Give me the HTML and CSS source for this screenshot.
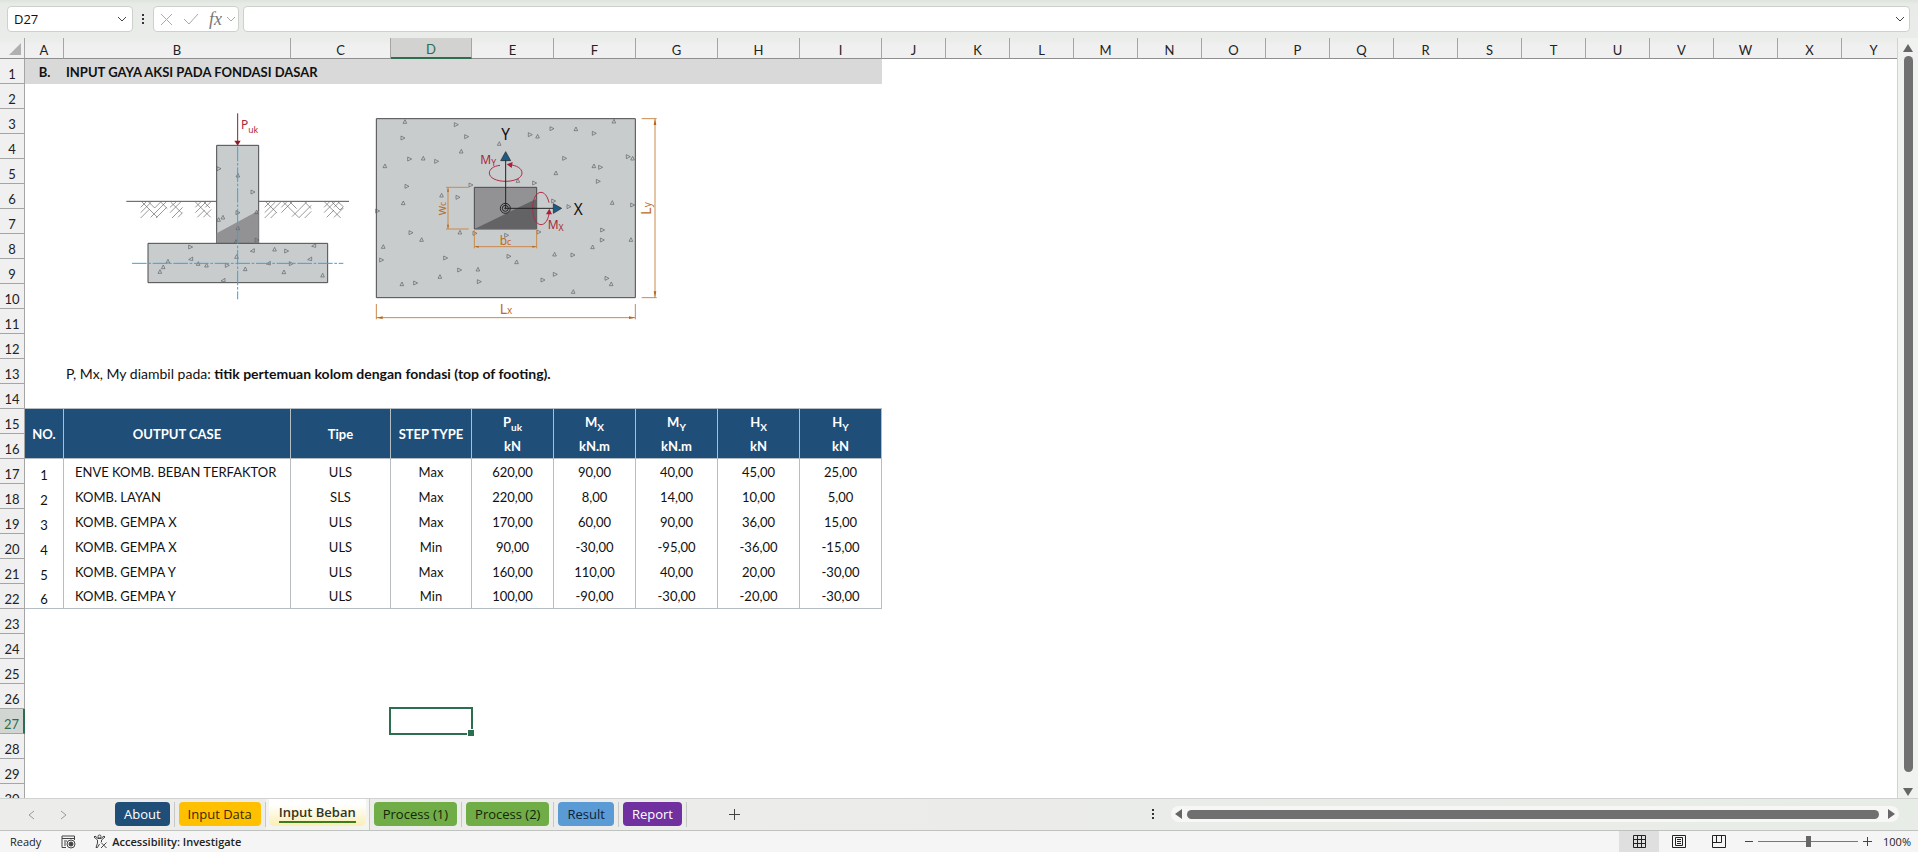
FILE: index.html
```html
<!DOCTYPE html>
<html lang="id">
<head>
    <meta charset="UTF-8">
    <meta name="viewport" content="width=device-width, initial-scale=1.0">
    <title>Input Beban</title>
    <link rel="stylesheet" href="styles.css">
</head>
<body>
    <!-- Formula bar -->
    <header class="formula-bar">
        <div class="name-box">
            <input type="text" value="D27" aria-label="Name Box">
            <button class="drop" aria-label="Open names"><svg width="10" height="6" viewBox="0 0 10 6"><path d="M1 1l4 4 4-4"/></svg></button>
        </div>
        <svg class="dots" width="3" height="11" viewBox="0 0 3 11"><path d="M0 0h2v2H0zM0 4h2v2H0zM0 8h2v2H0z"/></svg>
        <div class="fx-box">
            <button aria-label="Cancel"><svg width="13" height="13" viewBox="0 0 13 13"><path d="M1 1l11 11M12 1L1 12"/></svg></button>
            <button aria-label="Enter"><svg width="16" height="12" viewBox="0 0 16 12"><path d="M1 6l5 5L15 1"/></svg></button>
            <button class="fx" aria-label="Insert function">fx</button>
            <button class="fx-drop" aria-label="More functions"><svg width="10" height="6" viewBox="0 0 10 6"><path d="M1 1l4 4 4-4"/></svg></button>
        </div>
        <div class="formula">
            <input type="text" aria-label="Formula">
            <button class="drop" aria-label="Expand formula bar"><svg width="10" height="6" viewBox="0 0 10 6"><path d="M1 1l4 4 4-4"/></svg></button>
        </div>
    </header>

    <!-- Worksheet -->
    <main class="sheet">
        <div class="grid">
            <table>
                <colgroup>
                    <col class="w-head"><col class="w-no"><col class="w-case"><col class="w-type"><col class="w-step">
                    <col class="w-num" span="5">
                    <col class="w-std" span="16">
                </colgroup>
                <thead>
                    <tr>
                        <th class="corner" aria-label="Select all"><svg width="12" height="12" viewBox="0 0 12 12"><path d="M12 0v12H0z"/></svg></th>
                        <th>A</th><th>B</th><th>C</th><th class="on">D</th><th>E</th><th>F</th><th>G</th><th>H</th><th>I</th>
                        <th>J</th><th>K</th><th>L</th><th>M</th><th>N</th><th>O</th><th>P</th><th>Q</th><th>R</th><th>S</th>
                        <th>T</th><th>U</th><th>V</th><th>W</th><th>X</th><th>Y</th>
                    </tr>
                </thead>
                <tbody>
                    <tr><th>1</th><td class="title center">B.</td><td class="title" colspan="8">INPUT GAYA AKSI PADA FONDASI DASAR</td><td colspan="16"></td></tr>
                    <tr>
                        <th>2</th>
                        <td class="drawing" rowspan="11" colspan="25">
                            <div class="figures">
                                <!-- Elevation -->
                                <svg width="250" height="210" viewBox="0 0 750 630">
                                    <defs>
                                        <path id="up" d="M0 -6L5 5H-6z"/>
                                        <path id="rt" d="M-5 -6L7 0L-5 6z"/>
                                        <path id="lf" d="M6 -6L-6 2L6 5z"/>
                                    </defs>
                                    <g class="concrete">
                                        <path d="M320 136H446V430H320z"/>
                                        <path class="shade" d="M320 400L446 332V430H320z"/>
                                        <path d="M114 430H653V548H114z"/>
                                    </g>
                                    <path class="ground" d="M49 304H320M446 304H717"/>
                                    <g class="hatch">
                                        <path d="M92 322L108 306M92 338L124 306M92 354L118 328M96 306L142 352M116 306L134 324L152 306M122 352L168 306M138 354L170 322M152 306L172 326M180 322L198 306M180 338L212 306M186 354L218 322M204 352L218 338M182 306L216 340"/>
                                        <path d="M256 322L272 306M256 338L288 306M262 352L284 330M256 306L302 352M282 306L300 324M286 322L302 306M280 352L304 328"/>
                                        <path d="M464 322L480 306M464 338L496 306M464 354L512 306M482 354L500 336M468 306L500 338M514 322L530 306M514 338L546 306M520 306L566 352M540 306L560 326M546 350L590 306M566 354L604 316M584 354L604 334M584 306L604 326"/>
                                        <path d="M642 322L658 306M642 338L674 306M650 352L672 330M644 306L692 354M666 306L690 330L700 320M672 322L688 306M672 352L700 324M684 306L700 320"/>
                                    </g>
                                    <g class="stones">
                                        <use href="#rt" x="326" y="206"/><use href="#up" x="384" y="226"/><use href="#rt" x="428" y="276"/>
                                        <use href="#rt" x="383" y="338"/><use href="#up" x="326" y="359"/><use href="#up" x="339" y="352"/>
                                        <use href="#up" x="440" y="336"/><use href="#up" x="384" y="384"/><use href="#up" x="378" y="425"/><use href="#rt" x="440" y="420"/>
                                        <use href="#rt" x="241" y="441"/><use href="#lf" x="242" y="477"/><use href="#up" x="265" y="491"/><use href="#up" x="290" y="496"/>
                                        <use href="#up" x="174" y="484"/><use href="#up" x="160" y="501"/><use href="#up" x="150" y="515"/><use href="#rt" x="351" y="496"/>
                                        <use href="#up" x="380" y="470"/><use href="#up" x="406" y="507"/><use href="#lf" x="427" y="452"/><use href="#lf" x="475" y="490"/>
                                        <use href="#up" x="494" y="448"/><use href="#rt" x="529" y="453"/><use href="#rt" x="543" y="491"/><use href="#up" x="522" y="516"/>
                                        <use href="#lf" x="599" y="477"/><use href="#lf" x="611" y="437"/><use href="#up" x="638" y="526"/><use href="#lf" x="339" y="541"/>
                                    </g>
                                    <path class="axis" d="M383 140V598M66 490H700"/>
                                    <path class="load" d="M383 40V126"/>
                                    <path class="load-head" d="M373 122H392L383 137z"/>
                                    <text class="red" x="393" y="88" font-size="36">P<tspan font-size="26" dy="10">uk</tspan></text>
                                </svg>
                                <!-- Plan -->
                                <svg width="320" height="230" viewBox="0 0 960 690">
                                    <g class="concrete">
                                        <path d="M49 56H826V593H49z"/>
                                        <path class="column" d="M343 262H530V387H343z"/>
                                        <path class="column-shade" d="M345 386L530 296V386z"/>
                                    </g>
                                    <g class="stones">
                                        <use href="#up" x="135" y="65"/><use href="#rt" x="288" y="74"/><use href="#rt" x="128" y="114"/><use href="#rt" x="319" y="110"/>
                                        <use href="#up" x="418" y="131"/><use href="#rt" x="510" y="104"/><use href="#up" x="533" y="109"/><use href="#rt" x="575" y="86"/>
                                        <use href="#up" x="648" y="87"/><use href="#rt" x="702" y="100"/><use href="#up" x="762" y="64"/><use href="#up" x="304" y="154"/>
                                        <use href="#rt" x="148" y="177"/><use href="#up" x="190" y="175"/><use href="#rt" x="229" y="184"/><use href="#up" x="75" y="198"/>
                                        <use href="#rt" x="613" y="175"/><use href="#rt" x="804" y="170"/><use href="#up" x="818" y="175"/><use href="#up" x="702" y="198"/>
                                        <use href="#rt" x="721" y="202"/><use href="#up" x="588" y="219"/><use href="#rt" x="714" y="244"/><use href="#up" x="474" y="242"/>
                                        <use href="#rt" x="523" y="249"/><use href="#rt" x="332" y="255"/><use href="#rt" x="140" y="259"/><use href="#up" x="245" y="286"/>
                                        <use href="#rt" x="293" y="292"/><use href="#up" x="130" y="309"/><use href="#rt" x="52" y="333"/><use href="#rt" x="580" y="303"/>
                                        <use href="#rt" x="626" y="320"/><use href="#up" x="757" y="308"/><use href="#rt" x="817" y="315"/><use href="#rt" x="152" y="398"/>
                                        <use href="#up" x="185" y="419"/><use href="#up" x="300" y="397"/><use href="#rt" x="344" y="400"/><use href="#rt" x="439" y="406"/>
                                        <use href="#rt" x="536" y="396"/><use href="#rt" x="727" y="390"/><use href="#rt" x="726" y="420"/><use href="#up" x="813" y="419"/>
                                        <use href="#up" x="70" y="440"/><use href="#rt" x="64" y="480"/><use href="#rt" x="256" y="474"/><use href="#rt" x="446" y="469"/>
                                        <use href="#up" x="470" y="486"/><use href="#up" x="584" y="463"/><use href="#rt" x="638" y="465"/><use href="#up" x="698" y="441"/>
                                        <use href="#rt" x="298" y="510"/><use href="#up" x="354" y="508"/><use href="#up" x="240" y="530"/><use href="#rt" x="357" y="545"/>
                                        <use href="#up" x="126" y="552"/><use href="#rt" x="166" y="549"/><use href="#rt" x="585" y="523"/><use href="#rt" x="548" y="540"/>
                                        <use href="#rt" x="740" y="535"/><use href="#up" x="754" y="552"/><use href="#up" x="640" y="575"/>
                                    </g>
                                    <g class="dims">
                                        <path d="M258 262H326M258 387H326M264 262V387M343 390V445M530 390V445M343 440H530M845 56H890M845 593H890M885 56V593M49 612V658M826 612V658M49 653H826"/>
                                        <path class="tips" d="M885 57l-4 18h8zM885 592l-4-18h8zM50 653l18-4v8zM825 653l-18-4v8zM264 263l-3 12h6zM264 386l-3-12h6zM344 440l12-3v6zM529 440l-12-3v6z"/>
                                    </g>
                                    <g class="moment">
                                        <path d="M420 196C400 198 388 208 388 219C388 234 410 244 437 244S486 234 486 219C486 205 470 196 448 194"/>
                                        <path d="M567 308C562 286 552 277 543 277C528 277 518 298 518 325S528 374 543 374C555 374 564 360 567 342"/>
                                        <path class="tips" d="M440 193L458 186L455 204zM568 326L558 343H576z"/>
                                    </g>
                                    <path class="arrows" d="M437 325V180M437 325H580"/>
                                    <path class="arrow-heads" d="M437 155L422 182H452zM605 325L580 311V340z"/>
                                    <g class="origin"><circle cx="436" cy="325" r="15"/><circle cx="436" cy="325" r="9"/><circle cx="436" cy="325" r="2"/></g>
                                    <g class="axis-names"><text x="424" y="121" font-size="46">Y</text><text x="641" y="344" font-size="46">X</text></g>
                                    <g class="red">
                                        <text x="361" y="193" font-size="36">M<tspan font-size="26" dy="6">Y</tspan></text>
                                        <text x="563" y="388" font-size="36">M<tspan font-size="26" dy="6">X</tspan></text>
                                    </g>
                                    <g class="orange">
                                        <text x="419" y="434" font-size="36">b<tspan font-size="26">c</tspan></text>
                                        <text x="419" y="641" font-size="42">L<tspan font-size="30">x</tspan></text>
                                        <text transform="translate(257 346) rotate(-90)" font-size="36">w<tspan font-size="26">c</tspan></text>
                                        <text transform="translate(873 344) rotate(-90)" font-size="42">L<tspan font-size="30">y</tspan></text>
                                    </g>
                                </svg>
                            </div>
                        </td>
                    </tr>
                    <tr><th>3</th></tr>
                    <tr><th>4</th></tr>
                    <tr><th>5</th></tr>
                    <tr><th>6</th></tr>
                    <tr><th>7</th></tr>
                    <tr><th>8</th></tr>
                    <tr><th>9</th></tr>
                    <tr><th>10</th></tr>
                    <tr><th>11</th></tr>
                    <tr><th>12</th></tr>
                    <tr><th>13</th><td></td><td class="note" colspan="24">P, Mx, My diambil pada: <b>titik pertemuan kolom dengan fondasi (top of footing).</b></td></tr>
                    <tr class="above"><th>14</th><td colspan="9"></td><td colspan="16"></td></tr>
                    <tr class="head">
                        <th>15</th><td rowspan="2">NO.</td><td rowspan="2">OUTPUT CASE</td><td rowspan="2">Tipe</td><td rowspan="2">STEP TYPE</td>
                        <td>P<sub>uk</sub></td><td>M<sub>X</sub></td><td>M<sub>Y</sub></td><td>H<sub>X</sub></td><td>H<sub>Y</sub></td>
                    </tr>
                    <tr class="head last"><th>16</th><td>kN</td><td>kN.m</td><td>kN.m</td><td>kN</td><td>kN</td></tr>
                    <tr class="data"><th>17</th><td>1</td><td>ENVE KOMB. BEBAN TERFAKTOR</td><td>ULS</td><td>Max</td><td>620,00</td><td>90,00</td><td>40,00</td><td>45,00</td><td>25,00</td></tr>
                    <tr class="data"><th>18</th><td>2</td><td>KOMB. LAYAN</td><td>SLS</td><td>Max</td><td>220,00</td><td>8,00</td><td>14,00</td><td>10,00</td><td>5,00</td></tr>
                    <tr class="data"><th>19</th><td>3</td><td>KOMB. GEMPA X</td><td>ULS</td><td>Max</td><td>170,00</td><td>60,00</td><td>90,00</td><td>36,00</td><td>15,00</td></tr>
                    <tr class="data"><th>20</th><td>4</td><td>KOMB. GEMPA X</td><td>ULS</td><td>Min</td><td>90,00</td><td>-30,00</td><td>-95,00</td><td>-36,00</td><td>-15,00</td></tr>
                    <tr class="data"><th>21</th><td>5</td><td>KOMB. GEMPA Y</td><td>ULS</td><td>Max</td><td>160,00</td><td>110,00</td><td>40,00</td><td>20,00</td><td>-30,00</td></tr>
                    <tr class="data last"><th>22</th><td>6</td><td>KOMB. GEMPA Y</td><td>ULS</td><td>Min</td><td>100,00</td><td>-90,00</td><td>-30,00</td><td>-20,00</td><td>-30,00</td></tr>
                    <tr><th>23</th></tr>
                    <tr><th>24</th></tr>
                    <tr><th>25</th></tr>
                    <tr><th>26</th></tr>
                    <tr><th class="on">27</th><td colspan="3"></td><td class="selected"></td></tr>
                    <tr><th>28</th></tr>
                    <tr><th>29</th></tr>
                    <tr><th>30</th></tr>
                </tbody>
            </table>
        </div>
        <div class="vscroll">
            <svg width="10" height="8" viewBox="0 0 10 8"><path d="M5 0l5 8H0z"/></svg>
            <div class="thumb"></div>
            <svg width="10" height="8" viewBox="0 0 10 8"><path d="M0 0h10L5 8z"/></svg>
        </div>
    </main>

    <!-- Sheet tabs -->
    <nav class="tabs">
        <div class="tab-arrows">
            <button aria-label="Previous sheet"><svg width="7" height="10" viewBox="0 0 7 10"><path d="M6 1L1 5l5 4"/></svg></button>
            <button aria-label="Next sheet"><svg width="7" height="10" viewBox="0 0 7 10"><path d="M1 1l5 4-5 4"/></svg></button>
        </div>
        <div class="tab-slot"><button class="tab navy">About</button></div>
        <div class="tab-slot"><button class="tab amber">Input Data</button></div>
        <div class="tab-slot current"><button class="tab"><span>Input Beban</span></button></div>
        <div class="tab-slot"><button class="tab green">Process (1)</button></div>
        <div class="tab-slot"><button class="tab green">Process (2)</button></div>
        <div class="tab-slot"><button class="tab blue">Result</button></div>
        <div class="tab-slot"><button class="tab purple">Report</button></div>
        <button class="add" aria-label="New sheet"><svg width="11" height="11" viewBox="0 0 11 11"><path d="M5.500 0v11M0 5.500h11"/></svg></button>
        <div class="hscroll">
            <svg class="dots" width="3" height="11" viewBox="0 0 3 11"><path d="M0 0h2v2H0zM0 4h2v2H0zM0 8h2v2H0z"/></svg>
            <div class="track">
                <svg width="7" height="10" viewBox="0 0 7 10"><path d="M7 0v10L0 5z"/></svg>
                <div class="thumb"></div>
                <svg width="7" height="10" viewBox="0 0 7 10"><path d="M0 0l7 5-7 5z"/></svg>
            </div>
        </div>
    </nav>

    <!-- Status bar -->
    <footer class="status">
        <span class="ready">Ready</span>
        <svg class="macro" width="15" height="14" viewBox="0 0 15 14"><path d="M5 12.500H1V1h12.500v4M1 3.500h12.500M3 6h3M3 8h2M3 10h2"/><circle cx="10" cy="9" r="4"/><circle class="fill" cx="10" cy="9" r="2"/></svg>
        <button class="access">
            <svg width="15" height="15" viewBox="0 0 15 15"><circle cx="6.500" cy="2.500" r="1.500"/><path d="M1 3l1-1 3 2.500h3L11 2l1 1-3.500 3v2M1 3l3.500 3v3L3 13.500h1.500L6.500 10M8 8.500l5.500 5.500M13.500 8.500L8 14"/></svg>
            Accessibility: Investigate
        </button>
        <div class="views">
            <button class="on" aria-label="Normal"><svg width="13" height="13" viewBox="0 0 13 13"><path d="M.5.5h12v12H.5zM4.500.5v12M8.500.5v12M.5 4.500h12M.5 8.500h12"/></svg></button>
            <button aria-label="Page layout"><svg width="14" height="13" viewBox="0 0 14 13"><path d="M.5.5h13v12H.5zM3.500 2.500h7v8h-7zM5 4.500h4M5 6.500h4M5 8.500h4"/></svg></button>
            <button aria-label="Page break preview"><svg width="14" height="13" viewBox="0 0 14 13"><path d="M.5.5h13v12H.5zM4.500.5v7M9.500.5v7M.5 7.500h9"/></svg></button>
        </div>
        <div class="zoom">
            <button aria-label="Zoom out"><svg width="8" height="9" viewBox="0 0 8 9"><path d="M0 4.500h8"/></svg></button>
            <input type="range" min="0" max="100" value="50" aria-label="Zoom">
            <button aria-label="Zoom in"><svg width="9" height="9" viewBox="0 0 9 9"><path d="M0 4.500h9M4.500 0v9"/></svg></button>
            <span>100%</span>
        </div>
    </footer>
</body>
</html>
```
FILE: styles.css
```css
* {
    box-sizing: border-box;
}

body {
    margin: 0;
    height: 100vh;
    display: flex;
    flex-direction: column;
    overflow: hidden;
    background: #e8ece7;
    color: #111;
    font-family: Lato, "Open Sans", sans-serif;
    font-size: 13px;
}

button, input {
    border: 0;
    padding: 0;
    background: none;
    color: inherit;
    font: inherit;
}

button {
    display: flex;
    align-items: center;
    justify-content: center;
}

svg {
    display: block;
    fill: none;
    stroke: #444;
}

.dots {
    fill: #333;
    stroke: none;
}

/* Formula bar */
.formula-bar {
    display: flex;
    align-items: center;
    height: 38px;
    padding: 0 8px 0 7px;
    background: linear-gradient(#dfe3de, #e8ebe7 4px, #e9ece8);
}

.name-box, .fx-box, .formula {
    display: flex;
    align-items: center;
    height: 26px;
    background: #fff;
    border: 1px solid #cdd1cc;
    border-radius: 4px;
}

.name-box {
    width: 126px;
    padding: 0 5px 0 6px;
    margin-right: 9px;
    font-family: "Open Sans", sans-serif;
}

.name-box input, .formula input {
    flex: 1;
    min-width: 0;
}

.fx-box {
    width: 86px;
    gap: 10px;
    padding: 0 2px 0 6px;
    margin: 0 4px 0 8px;
}

.fx-box svg {
    stroke: #aaa;
}

.fx-box .fx {
    color: #777;
    font: italic 18px "Liberation Serif", serif;
}

.fx-box .fx-drop {
    margin-left: -6px;
}

.formula {
    flex: 1;
    padding: 0 4px;
}

/* Worksheet */
.sheet {
    flex: 1;
    min-height: 0;
    display: flex;
}

.grid {
    flex: 1;
    min-width: 0;
    overflow: hidden;
    background: #fff;
    border-right: 1px solid #d0d4d0;
}

table {
    table-layout: fixed;
    width: 1906px;
    border-collapse: separate;
    border-spacing: 0;
}

.w-head { width: 25px; }
.w-no { width: 39px; }
.w-case { width: 227px; }
.w-type { width: 100px; }
.w-step { width: 81px; }
.w-num { width: 82px; }
.w-std { width: 64px; }

th, td {
    height: 25px;
    padding: 0;
    line-height: 18px;
    white-space: nowrap;
}

th {
    background: #f0f0f0;
    border-right: 1px solid #a5a5a5;
    border-bottom: 1px solid #a5a5a5;
    color: #222;
    font-weight: normal;
    vertical-align: bottom;
}

thead th {
    height: 21px;
    background: linear-gradient(#e9ece8, #f0f0f0 8px);
    border-bottom-color: #8f8f8f;
    line-height: 16px;
}

thead .on {
    background: #d2d2d0;
    border-bottom: 2px solid #2c6e4f;
    color: #2c6e4f;
}

tbody .on {
    background: #d2d6d2;
    border-right: 2px solid #2c6e4f;
    color: #2c6e4f;
}

.corner svg {
    margin: 0 3px 3px auto;
    fill: #b0b0b0;
    stroke: none;
}

.title {
    background: #d9d9d9;
    font-weight: bold;
}

.title, .note {
    padding-left: 2px;
}

.title.center {
    padding: 0;
    text-align: center;
}

.note {
    vertical-align: bottom;
    padding-bottom: 1px;
    font-size: 14px;
}

.above td:nth-child(2) {
    border-bottom: 1px solid #b4bcc4;
}

.head td {
    background: #1f4e78;
    border-right: 1px solid #b4bcc4;
    color: #fff;
    font-weight: bold;
    text-align: center;
}

.head td[rowspan], .head.last td, .data.last td {
    border-bottom: 1px solid #b4bcc4;
}

.head sub {
    font-size: 10px;
    line-height: 0;
}

.data td {
    border-right: 1px solid #b9bdc1;
    text-align: center;
}

.data td:nth-child(2) {
    vertical-align: bottom;
}

.data td:nth-child(3) {
    padding-left: 11px;
    text-align: left;
}

.selected {
    position: relative;
}

.selected::before {
    content: "";
    position: absolute;
    inset: -2px -1px -1px -2px;
    border: 2px solid #2c6e4f;
}

/* fill handle */
.selected::after {
    content: "";
    position: absolute;
    right: -2px;
    bottom: -2px;
    width: 6px;
    height: 6px;
    background: #2c6e4f;
    border: 1px solid #fff;
    border-width: 1px 0 0 1px;
}

/* Footing drawings */
.drawing {
    vertical-align: top;
}

.figures {
    display: flex;
    padding: 16px 0 0 85px;
}

.figures text {
    font-family: "Noto Sans", sans-serif;
    stroke: none;
}

.concrete {
    fill: #c9cccd;
    stroke: #4a4a4e;
    stroke-width: 3;
}

.shade { fill: #929294; stroke: none; }
.column { fill: #929294; }
.column-shade { fill: #636365; stroke: none; }
.ground { stroke: #555; stroke-width: 3; }
.hatch { stroke: #666; stroke-width: 2; }
.stones { stroke: #5c6066; stroke-width: 2; }
.axis { stroke: #38a3d8; stroke-width: 3; stroke-dasharray: 44 5 8 5; }
.load { stroke: #6b3037; stroke-width: 3; }
.load-head { fill: #8c1c2c; stroke: none; }
.dims { stroke: #c98a4b; stroke-width: 3; }
.tips { fill: #b5651d; stroke: none; }
.moment { stroke: #b02a45; stroke-width: 3; }
.moment .tips { fill: #b01c38; }
.arrows { stroke: #222; stroke-width: 3; }
.arrow-heads { fill: #1b5b86; stroke: #222; stroke-width: 2; }
.origin { stroke: #222; stroke-width: 3; }
.axis-names { fill: #111; }
.red { fill: #a82840; }
.orange { fill: #bf6a26; }

/* Scrollbars */
.vscroll {
    display: flex;
    flex-direction: column;
    align-items: center;
    gap: 4px;
    width: 20px;
    padding: 6px 0 2px;
    background: #f0f2ef;
}

.vscroll svg, .track svg {
    fill: #666;
    stroke: none;
}

.thumb {
    background: #6f706f;
    border-radius: 5px;
}

.vscroll .thumb {
    width: 9px;
    flex: 1;
    margin-bottom: 12px;
}

.hscroll {
    flex: 1;
    display: flex;
    align-items: center;
    justify-content: flex-end;
    gap: 16px;
    padding: 0 19px 1px 0;
}

.track {
    flex: 0 1 728px;
    display: flex;
    align-items: center;
    gap: 5px;
    padding: 3px 4px;
    border-radius: 8px;
    background: #f7f8f6;
}

.track .thumb {
    flex: 1;
    height: 9px;
}

.track svg:last-child {
    margin-left: 4px;
}

/* Sheet tabs */
.tabs {
    display: flex;
    align-items: center;
    height: 33px;
    background: linear-gradient(90deg, #ececeb 40%, #e8ece6);
    border-top: 1px solid #cfd2cf;
    border-bottom: 1px solid #bfc2bf;
    font-family: "Open Sans", sans-serif;
}

.tab-arrows {
    display: flex;
    gap: 25px;
    width: 111px;
    padding-left: 28px;
}

.tab-arrows svg {
    stroke: #999;
}

.tab-slot {
    display: flex;
    align-items: flex-start;
    height: 25px;
    padding: 0 4px;
    border-right: 1px solid #c6c8c6;
}

.tab {
    height: 24px;
    padding: 0 9px;
    border-radius: 4px;
    white-space: nowrap;
}

.navy { background: #1f4e78; color: #fff; }
.amber { background: #ffc000; color: #3a2b00; }
.green { background: #70ad47; color: #132608; }
.blue { background: #5b9bd5; color: #0c2238; }
.purple { background: #7030a0; color: #fff; }

.current {
    height: auto;
    align-self: stretch;
    padding: 0 3px;
    background: #f3f3ef;
}

.current .tab {
    height: 27px;
    padding: 0 10px;
    background: linear-gradient(#fff 20%, #fbeeb4);
    border-radius: 0 0 6px 6px;
    color: #33331f;
    font-weight: 600;
}

.current span {
    border-bottom: 2px solid #3e7d1c;
}

.add {
    margin-left: 42px;
}

/* Status bar */
.status {
    display: flex;
    align-items: center;
    height: 21px;
    padding: 0 7px 0 10px;
    background: #f5f5f5;
    color: #222;
    font-family: "Open Sans", sans-serif;
    font-size: 11px;
}

.macro {
    margin: 0 17px 0 20px;
}

.macro .fill {
    fill: #444;
}

.access {
    gap: 4px;
    font-weight: 600;
}

.views {
    display: flex;
    align-self: stretch;
    margin-left: auto;
}

.views button {
    width: 40px;
}

.views .on {
    background: #dfdfdf;
}

.views svg {
    stroke: #222;
}

.zoom {
    display: flex;
    align-items: center;
    gap: 5px;
    padding-left: 6px;
}

.zoom span {
    padding-left: 6px;
}

.zoom input {
    appearance: none;
    width: 100px;
    height: 11px;
    margin: 0;
    background: linear-gradient(#777, #777) center / 100% 1px no-repeat;
}

.zoom input::-webkit-slider-thumb {
    appearance: none;
    width: 5px;
    height: 11px;
    background: #666;
}
```
